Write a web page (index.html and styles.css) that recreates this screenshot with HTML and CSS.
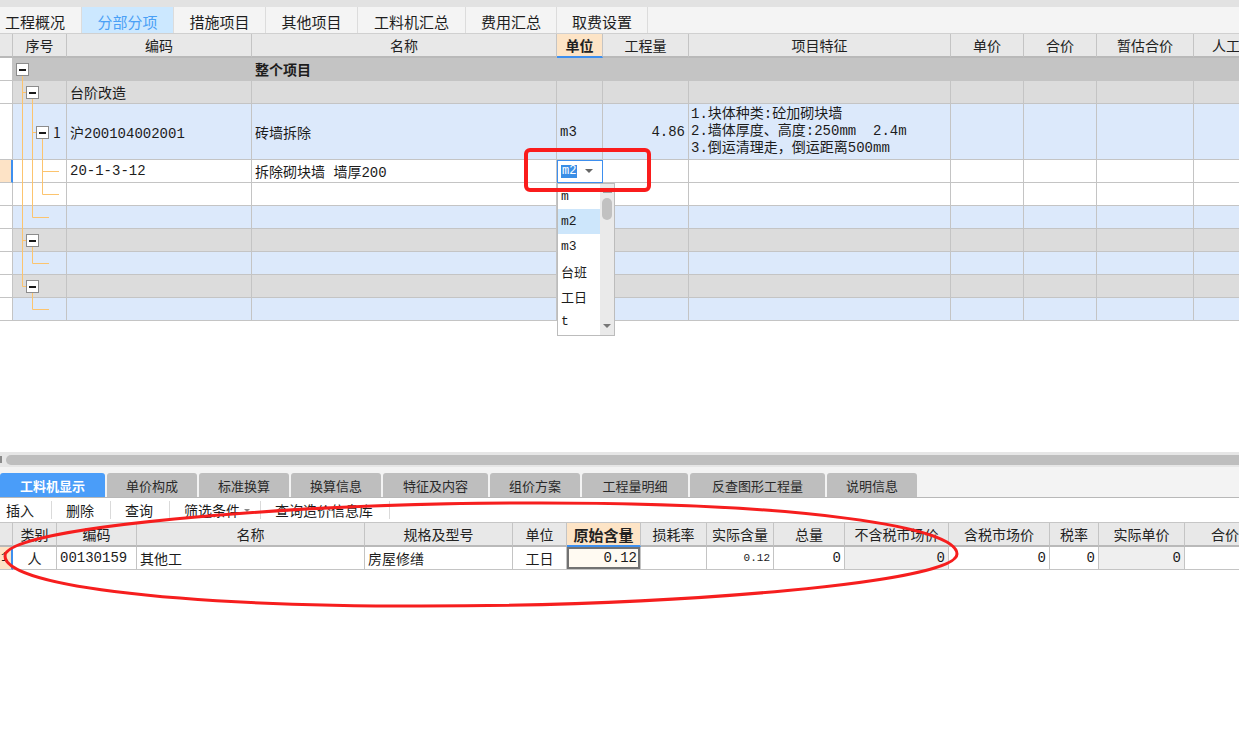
FILE: index.html
```html
<!DOCTYPE html>
<html lang="zh-CN">
<head>
<meta charset="utf-8">
<title>分部分项</title>
<link rel="stylesheet" href="styles.css">
</head>
<body>
<div class="app">
  <div class="topstrip"></div>
  <div class="tabs">
    <div class="tab first">工程概况</div>
    <div class="tab active">分部分项</div>
    <div class="tab">措施项目</div>
    <div class="tab">其他项目</div>
    <div class="tab w108">工料机汇总</div>
    <div class="tab w91">费用汇总</div>
    <div class="tab w91">取费设置</div>
  </div>

  <div class="main">
    <div class="row head">
      <div class="c"></div>
      <div class="c">序号</div>
      <div class="c">编码</div>
      <div class="c">名称</div>
      <div class="c hl">单位</div>
      <div class="c">工程量</div>
      <div class="c">项目特征</div>
      <div class="c">单价</div>
      <div class="c">合价</div>
      <div class="c">暂估合价</div>
      <div class="c last">人工</div>
    </div>
    <div class="row r-top">
      <div class="c ind"></div><div class="c"></div><div class="c"></div>
      <div class="c bold">整个项目</div>
      <div class="c"></div><div class="c"></div><div class="c"></div><div class="c"></div><div class="c"></div><div class="c"></div><div class="c"></div>
    </div>
    <div class="row r-group">
      <div class="c ind"></div><div class="c"></div>
      <div class="c">台阶改造</div>
      <div class="c"></div><div class="c"></div><div class="c"></div><div class="c"></div><div class="c"></div><div class="c"></div><div class="c"></div><div class="c"></div>
    </div>
    <div class="row r-blue tall">
      <div class="c ind"></div>
      <div class="c seq">1</div>
      <div class="c mono">沪200104002001</div>
      <div class="c">砖墙拆除</div>
      <div class="c mono">m3</div>
      <div class="c mono num">4.86</div>
      <div class="c mono feat"><span>1.块体种类:砼加砌块墙</span><span>2.墙体厚度、高度:250mm  2.4m</span><span>3.倒运清理走，倒运距离500mm</span></div>
      <div class="c"></div><div class="c"></div><div class="c"></div><div class="c"></div>
    </div>
    <div class="row r-white">
      <div class="c ind cur"></div><div class="c"></div>
      <div class="c mono">20-1-3-12</div>
      <div class="c mono">拆除砌块墙 墙厚200</div>
      <div class="c edit"><span class="sel">m2</span><span class="caret"></span></div>
      <div class="c"></div><div class="c"></div><div class="c"></div><div class="c"></div><div class="c"></div><div class="c"></div>
    </div>
    <div class="row r-white">
      <div class="c ind"></div><div class="c"></div><div class="c"></div><div class="c"></div><div class="c"></div><div class="c"></div><div class="c"></div><div class="c"></div><div class="c"></div><div class="c"></div><div class="c"></div>
    </div>
    <div class="row r-blue">
      <div class="c ind"></div><div class="c"></div><div class="c"></div><div class="c"></div><div class="c"></div><div class="c"></div><div class="c"></div><div class="c"></div><div class="c"></div><div class="c"></div><div class="c"></div>
    </div>
    <div class="row r-group">
      <div class="c ind"></div><div class="c"></div><div class="c"></div><div class="c"></div><div class="c"></div><div class="c"></div><div class="c"></div><div class="c"></div><div class="c"></div><div class="c"></div><div class="c"></div>
    </div>
    <div class="row r-blue">
      <div class="c ind"></div><div class="c"></div><div class="c"></div><div class="c"></div><div class="c"></div><div class="c"></div><div class="c"></div><div class="c"></div><div class="c"></div><div class="c"></div><div class="c"></div>
    </div>
    <div class="row r-group">
      <div class="c ind"></div><div class="c"></div><div class="c"></div><div class="c"></div><div class="c"></div><div class="c"></div><div class="c"></div><div class="c"></div><div class="c"></div><div class="c"></div><div class="c"></div>
    </div>
    <div class="row r-blue">
      <div class="c ind"></div><div class="c"></div><div class="c"></div><div class="c"></div><div class="c"></div><div class="c"></div><div class="c"></div><div class="c"></div><div class="c"></div><div class="c"></div><div class="c"></div>
    </div>
  </div>

  <div class="hscroll"><div class="hs-left"></div><div class="hs-thumb"></div></div>

  <div class="btabs">
    <div class="btab active w105">工料机显示</div>
    <div class="btab">单价构成</div>
    <div class="btab">标准换算</div>
    <div class="btab">换算信息</div>
    <div class="btab w105">特征及内容</div>
    <div class="btab">组价方案</div>
    <div class="btab w106">工程量明细</div>
    <div class="btab w135">反查图形工程量</div>
    <div class="btab">说明信息</div>
  </div>

  <div class="toolbar">
    <div class="tool first">插入</div>
    <div class="tool">删除</div>
    <div class="tool">查询</div>
    <div class="tool drop">筛选条件<span class="tcaret"></span></div>
    <div class="tool">查询造价信息库</div>
    <div class="tool"></div>
  </div>

  <div class="lower">
    <div class="lrow lhead">
      <div class="c"></div>
      <div class="c">类别</div>
      <div class="c">编码</div>
      <div class="c">名称</div>
      <div class="c">规格及型号</div>
      <div class="c">单位</div>
      <div class="c hl bold">原始含量</div>
      <div class="c">损耗率</div>
      <div class="c">实际含量</div>
      <div class="c">总量</div>
      <div class="c">不含税市场价</div>
      <div class="c">含税市场价</div>
      <div class="c">税率</div>
      <div class="c">实际单价</div>
      <div class="c">合价</div>
    </div>
    <div class="lrow">
      <div class="c ind cur"><span class="rn">1</span></div>
      <div class="c center">人</div>
      <div class="c mono">00130159</div>
      <div class="c">其他工</div>
      <div class="c">房屋修缮</div>
      <div class="c center">工日</div>
      <div class="c mono num focus">0.12</div>
      <div class="c"></div>
      <div class="c mono num small">0.12</div>
      <div class="c mono num">0</div>
      <div class="c mono num grey">0</div>
      <div class="c mono num">0</div>
      <div class="c mono num">0</div>
      <div class="c mono num grey">0</div>
      <div class="c"></div>
    </div>
  </div>

  <svg class="tree" width="70" height="330" viewBox="0 0 70 330">
    <g stroke="#fcc46e" stroke-width="1" fill="none">
      <path d="M22.5 75 V286.5 M22.5 92.5 H26 M22.5 240.5 H26 M22.5 286.5 H26"/>
      <path d="M32.5 98 V217.5 H49 M32.5 132.5 H36"/>
      <path d="M42.5 138 V194.5 H59 M42.5 171.5 H59"/>
      <path d="M32.5 246 V263.5 H49 M32.5 292 V309.5 H49"/>
    </g>
    <g fill="#fff" stroke="#8c8c8c" stroke-width="1">
      <rect x="16.5" y="63.5" width="12" height="12"/>
      <rect x="26.5" y="86.5" width="12" height="12"/>
      <rect x="36.5" y="126.5" width="12" height="12"/>
      <rect x="26.5" y="234.5" width="12" height="12"/>
      <rect x="26.5" y="280.5" width="12" height="12"/>
    </g>
    <g fill="#1a1a1a">
      <rect x="19" y="69" width="7" height="2"/>
      <rect x="29" y="92" width="7" height="2"/>
      <rect x="39" y="132" width="7" height="2"/>
      <rect x="29" y="240" width="7" height="2"/>
      <rect x="29" y="286" width="7" height="2"/>
    </g>
  </svg>

  <div class="dropdown">
    <div class="dd-list">
      <div class="dd-item">m</div>
      <div class="dd-item on">m2</div>
      <div class="dd-item">m3</div>
      <div class="dd-item">台班</div>
      <div class="dd-item">工日</div>
      <div class="dd-item">t</div>
    </div>
    <div class="dd-scroll">
      <div class="dd-up"></div>
      <div class="dd-thumb"></div>
      <div class="dd-down"></div>
    </div>
  </div>

  <svg class="annot" width="1239" height="752" viewBox="0 0 1239 752">
    <rect x="526" y="150" width="123" height="40" rx="4" fill="none" stroke="#fa1c1c" stroke-width="4"/>
    <path d="M5 556 C5 528 278 503 541 503 C804 503 957 527 957 554 C957 582 684 606 421 606 C158 606 5 584 5 556 Z" fill="none" stroke="#f61e1e" stroke-width="3"/>
  </svg>
</div>
</body>
</html>
```

FILE: styles.css
```css
* { box-sizing: border-box; }

body {
  margin: 0;
  background: #ffffff;
  font-family: "Noto Sans CJK SC", sans-serif;
  color: #1c1c1c;
}

.app {
  position: relative;
  width: 1239px;
  height: 752px;
  overflow: hidden;
  background: #ffffff;
}

.topstrip {
  height: 7px;
  background: #e2e2e2;
}

/* ---------- top tabs ---------- */
.tabs {
  height: 27px;
  display: flex;
  background: #f4f4f4;
  border-bottom: 1px solid #d0d0d0;
}

.tab {
  width: 92px;
  display: flex;
  align-items: center;
  justify-content: center;
  padding-top: 2px;
  font-size: 15px;
  color: #1e1e1e;
  border-right: 1px solid #dcdcdc;
  white-space: nowrap;
}

.tab.first {
  width: 82px;
  justify-content: flex-start;
  padding-left: 5px;
}

.tab.active {
  background: #cce8ff;
  color: #4aa0f6;
}

.tab.w108 { width: 108px; }
.tab.w91 { width: 91px; }

/* ---------- main grid ---------- */
.main {
  height: 418px;
  overflow: hidden;
}

.row {
  display: grid;
  grid-template-columns: 13px 54px 185px 305px 46px 86px 262px 73px 73px 97px 84px;
  height: 23px;
  width: 1278px;
}

.row > .c {
  border-right: 1px solid #c4c4c4;
  border-bottom: 1px solid #c4c4c4;
  display: flex;
  align-items: center;
  padding: 0 3px;
  white-space: nowrap;
  overflow: hidden;
  font-size: 14px;
}

.row.head { height: 24px; }

.row.head > .c {
  background: #e8e8e8;
  border-bottom: 2px solid #b9b9b9;
  justify-content: center;
  color: #222;
}

.row.head > .c.last {
  justify-content: flex-start;
  padding-left: 18px;
}

.row.head > .c.hl {
  background: #fde4c6;
  border-bottom: 2px solid #3d8fef;
  font-weight: bold;
}

.row.tall { height: 56px; }

.r-top { background: #c4c4c4; }
.r-group { background: #dcdcdc; }
.r-blue { background: #dce9fb; }
.r-white { background: #ffffff; }

.c.ind { background: #ffffff; }

.c.ind.cur {
  background: #fde3c6;
  border-right: 2px solid #3d8fef;
}

.bold { font-weight: bold; }

.mono {
  font-family: "Liberation Mono", "Noto Sans CJK SC", monospace;
}

.c.num { justify-content: flex-end; }
.c.center { justify-content: center; }

.c.seq { padding-left: 40px; }

.c.feat {
  flex-direction: column;
  align-items: flex-start;
  justify-content: center;
  line-height: 17px;
  padding-left: 2px;
  white-space: pre;
}

.c.edit {
  background: #ffffff;
  outline: 1px solid #3d8fef;
  outline-offset: -1px;
  padding-left: 4px;
}

.sel {
  background: #3a8ee6;
  color: #ffffff;
  font-family: "Liberation Mono", monospace;
  font-size: 12px;
  line-height: 13px;
  padding: 0 1px;
}

.caret {
  margin-left: auto;
  margin-right: 6px;
  width: 0;
  height: 0;
  border-left: 4px solid transparent;
  border-right: 4px solid transparent;
  border-top: 4px solid #666;
}

/* ---------- horizontal scrollbar ---------- */
.hscroll {
  height: 15px;
  background: #e6e6e6;
  display: flex;
  align-items: center;
}

.hs-left {
  width: 2px;
  height: 7px;
  background: #8a8a8a;
}

.hs-thumb {
  flex: 1;
  height: 10px;
  margin-left: 4px;
  border-radius: 5px 0 0 5px;
  background: #bebebe;
}

/* ---------- bottom tabs ---------- */
.btabs {
  height: 31px;
  display: flex;
  align-items: flex-end;
  gap: 2px;
  background: #f3f3f3;
  border-bottom: 1px solid #b8b8b8;
}

.btab {
  width: 90px;
  height: 24px;
  display: flex;
  align-items: center;
  justify-content: center;
  background: #bebebe;
  border-radius: 3px 3px 0 0;
  font-size: 13px;
  color: #2a2a2a;
  white-space: nowrap;
}

.btab.active {
  background: #4a9df9;
  color: #ffffff;
  font-weight: bold;
}

.btab.w105 { width: 105px; }
.btab.w106 { width: 106px; }
.btab.w135 { width: 135px; }

/* ---------- toolbar ---------- */
.toolbar {
  height: 24px;
  display: flex;
  align-items: center;
}

.tool {
  display: flex;
  align-items: center;
  height: 18px;
  padding: 0 16px 0 14px;
  border-left: 1px solid #dadada;
  font-size: 14px;
  color: #1c1c1c;
}

.tool.first {
  border-left: none;
  padding-left: 6px;
  padding-right: 17px;
}

.tool.drop { padding-right: 10px; }

.tcaret {
  margin-left: 4px;
  width: 0;
  height: 0;
  border-left: 3px solid transparent;
  border-right: 3px solid transparent;
  border-top: 3px solid #888;
}

/* ---------- lower grid ---------- */
.lower {
  border-top: 1px solid #c6c6c6;
}

.lrow {
  display: grid;
  grid-template-columns: 13px 44px 80px 228px 148px 54px 74px 66px 67px 71px 104px 101px 49px 86px 82px;
  height: 23px;
  width: 1267px;
}

.lrow > .c {
  border-right: 1px solid #c4c4c4;
  border-bottom: 1px solid #c4c4c4;
  display: flex;
  align-items: center;
  padding: 0 3px;
  white-space: nowrap;
  overflow: hidden;
  font-size: 14px;
}

.lrow.lhead { height: 24px; }

.lrow.lhead > .c {
  background: #e8e8e8;
  border-bottom: 2px solid #b9b9b9;
  justify-content: center;
  color: #222;
}

.lrow.lhead > .c:last-child {
  justify-content: flex-start;
  padding-left: 26px;
}

.lrow.lhead > .c.hl {
  background: #fde4c6;
  border-bottom: 2px solid #3d8fef;
  font-size: 15px;
}

.lrow > .c.ind.cur { padding: 0 0 0 1px; }

.rn {
  font-size: 12px;
  font-family: "Liberation Mono", monospace;
}

.lrow > .c.focus {
  background: #fffaf2;
  box-shadow: inset 0 0 0 2px #727272;
}

.lrow > .c.small { font-size: 11px; }

.lrow > .c.grey { background: #efefef; }

/* ---------- overlays ---------- */
.tree {
  position: absolute;
  left: 0;
  top: 0;
}

.dropdown {
  position: absolute;
  left: 557px;
  top: 183px;
  width: 58px;
  height: 153px;
  background: #ffffff;
  border: 1px solid #bcbcbc;
  display: flex;
}

.dd-list {
  width: 42px;
  display: flex;
  flex-direction: column;
}

.dd-item {
  height: 25px;
  display: flex;
  align-items: center;
  padding-left: 3px;
  font-family: "Liberation Mono", "Noto Sans CJK SC", monospace;
  font-size: 13px;
  color: #1c1c1c;
}

.dd-item.on { background: #cde6fb; }

.dd-scroll {
  width: 14px;
  background: #eaeaea;
  display: flex;
  flex-direction: column;
  align-items: center;
}

.dd-up {
  width: 9px;
  height: 2px;
  margin-top: 7px;
  background: #a0a0a0;
}

.dd-thumb {
  width: 10px;
  height: 22px;
  margin-top: 5px;
  border-radius: 5px;
  background: #c1c1c1;
}

.dd-down {
  margin-top: auto;
  margin-bottom: 7px;
  width: 0;
  height: 0;
  border-left: 4px solid transparent;
  border-right: 4px solid transparent;
  border-top: 4px solid #777;
}

.annot {
  position: absolute;
  left: 0;
  top: 0;
  pointer-events: none;
}
```
